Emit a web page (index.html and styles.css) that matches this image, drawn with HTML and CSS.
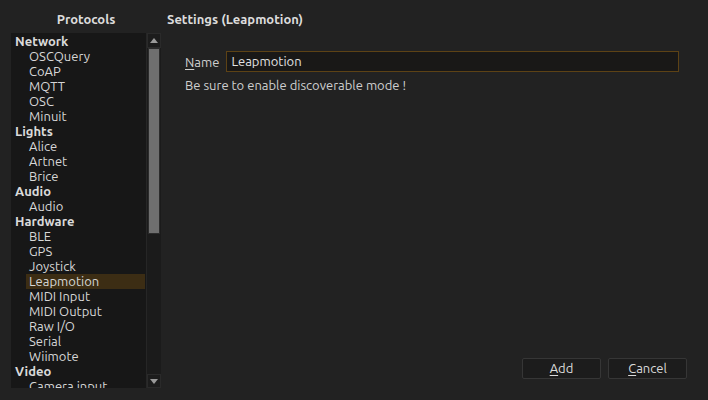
FILE: index.html
```html
<!DOCTYPE html>
<html>
<head>
<meta charset="utf-8">
<link rel="stylesheet" href="styles.css">
</head>
<body>
<div class="window">
  <div class="left">
    <div class="title left-title">Protocols</div>
    <div class="listbox">
      <div class="list">
        <div class="row cat">Network</div>
        <div class="row item">OSCQuery</div>
        <div class="row item">CoAP</div>
        <div class="row item">MQTT</div>
        <div class="row item">OSC</div>
        <div class="row item">Minuit</div>
        <div class="row cat">Lights</div>
        <div class="row item">Alice</div>
        <div class="row item">Artnet</div>
        <div class="row item">Brice</div>
        <div class="row cat">Audio</div>
        <div class="row item">Audio</div>
        <div class="row cat">Hardware</div>
        <div class="row item">BLE</div>
        <div class="row item">GPS</div>
        <div class="row item">Joystick</div>
        <div class="row item selected">Leapmotion</div>
        <div class="row item">MIDI Input</div>
        <div class="row item">MIDI Output</div>
        <div class="row item">Raw I/O</div>
        <div class="row item">Serial</div>
        <div class="row item">Wiimote</div>
        <div class="row cat">Video</div>
        <div class="row item">Camera input</div>
      </div>
      <div class="scrollbar">
        <div class="arrow up"><span class="tri tri-up"></span></div>
        <div class="track"><div class="thumb"></div></div>
        <div class="arrow down"><span class="tri tri-down"></span></div>
      </div>
    </div>
  </div>
  <div class="right">
    <div class="title">Settings (Leapmotion)</div>
    <div class="form">
      <div class="field">
        <label class="label"><u>N</u>ame</label>
        <div class="input">Leapmotion</div>
      </div>
      <div class="note">Be sure to enable discoverable mode !</div>
    </div>
    <div class="buttons">
      <div class="btn"><u>A</u>dd</div>
      <div class="btn"><u>C</u>ancel</div>
    </div>
  </div>
</div>
</body>
</html>
```

FILE: styles.css
```css
html, body {
  margin: 0;
  padding: 0;
  background: #222222;
}
body {
  font-family: "Ubuntu", "Lato", "Noto Sans", sans-serif;
  font-size: 13px;
  color: #d6d6d6;
}
.window {
  display: flex;
  width: 708px;
  height: 400px;
  overflow: hidden;
}
.left {
  margin-left: 11px;
  width: 150px;
  display: flex;
  flex-direction: column;
}
.title {
  height: 33px;
  line-height: 38px;
  font-weight: bold;
  color: #dcdcdc;
  white-space: nowrap;
}
.left-title {
  text-align: center;
}
.listbox {
  height: 355px;
  background: #171717;
  display: flex;
  overflow: hidden;
}
.list {
  flex: 1;
  padding-top: 1px;
}
.row {
  height: 15px;
  line-height: 15px;
  white-space: nowrap;
}
.cat {
  padding-left: 4px;
  font-weight: bold;
  color: #dadada;
}
.item {
  margin-left: 15px;
  padding-left: 3px;
  margin-right: 1px;
}
.selected {
  background: #3c2d14;
}
.scrollbar {
  width: 14px;
  display: flex;
  flex-direction: column;
  background: #1b1b1b;
  border-left: 1px solid #262626;
}
.arrow {
  height: 14px;
  display: flex;
  align-items: center;
  justify-content: center;
  background: #1c1c1c;
  border: 1px solid #2a2a2a;
  box-sizing: border-box;
}
.up { height: 15px; }
.tri {
  width: 0;
  height: 0;
  border-left: 4px solid transparent;
  border-right: 4px solid transparent;
}
.tri-up { border-bottom: 5px solid #9a9a9a; }
.tri-down { border-top: 5px solid #9a9a9a; }
.track {
  flex: 1;
  padding: 0 1px;
}
.thumb {
  margin-top: 0px;
  height: 186px;
  background: #6f6f6f;
  border: 1px solid #2c2c2c;
  box-sizing: border-box;
}
.right {
  flex: 1;
  padding-left: 6px;
  padding-right: 21px;
  padding-bottom: 21px;
  display: flex;
  flex-direction: column;
}
.form {
  padding-left: 18px;
  padding-top: 18px;
  padding-right: 8px;
}
.field {
  display: flex;
  align-items: center;
  gap: 7px;
}
.label {
  color: #cfcfcf;
}
.input {
  flex: 1;
  height: 21px;
  line-height: 19px;
  box-sizing: border-box;
  background: #191817;
  border: 1px solid #5d4215;
  padding-left: 4px;
  color: #e2e2e2;
}
.note {
  margin-top: 6px;
  line-height: 15px;
  color: #cfcfcf;
}
.buttons {
  margin-top: auto;
  display: flex;
  justify-content: flex-end;
  gap: 7px;
}
.btn {
  width: 79px;
  height: 21px;
  line-height: 19px;
  box-sizing: border-box;
  background: #1c1c1c;
  border: 1px solid #363636;
  border-radius: 2px;
  text-align: center;
  color: #dadada;
}
u {
  text-underline-offset: 2px;
}
```
